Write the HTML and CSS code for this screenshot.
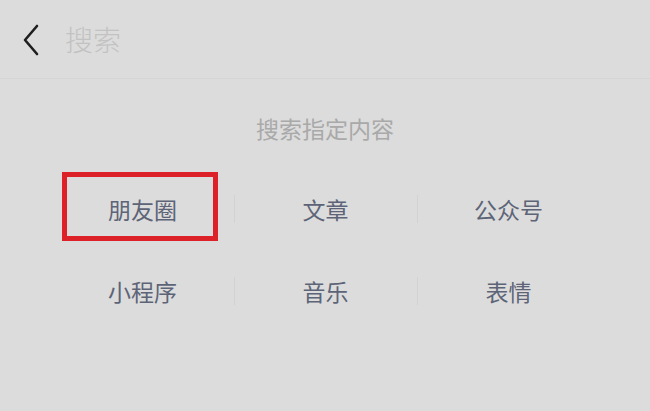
FILE: index.html
```html
<!DOCTYPE html>
<html lang="zh">
<head>
<meta charset="utf-8">
<link rel="stylesheet" href="styles.css">
</head>
<body>
<div class="header">
  <svg class="back" width="20" height="34" viewBox="0 0 20 34"><path d="M16 3 L4 17 L16 31" fill="none" stroke="#1e1e1e" stroke-width="2.6" stroke-linecap="round" stroke-linejoin="round"/></svg>
  <span class="title">搜索</span>
</div>
<div class="caption">搜索指定内容</div>
<div class="grid">
  <div class="cell first"><span>朋友圈</span><div class="mark"></div></div>
  <div class="cell"><span>文章</span></div>
  <div class="cell"><span>公众号</span></div>
  <div class="cell"><span>小程序</span></div>
  <div class="cell"><span>音乐</span></div>
  <div class="cell"><span>表情</span></div>
</div>
</body>
</html>
```
FILE: styles.css
```css
html, body {
  margin: 0;
  padding: 0;
  background: #dcdcdc;
  font-family: "Noto Sans CJK SC", "Noto Sans", sans-serif;
}
body {
  width: 650px;
  height: 411px;
  overflow: hidden;
}
.header {
  height: 78px;
  border-bottom: 1px solid #d5d5d5;
  display: flex;
  align-items: center;
  padding-left: 21px;
  box-sizing: content-box;
}
.back {
  display: block;
  margin-right: 24px;
  margin-top: 2px;
}
.title {
  font-size: 28px;
  color: #c2c2c2;
  line-height: 1;
  font-weight: 300;
}
.caption {
  margin-top: 34px;
  height: 30px;
  line-height: 30px;
  text-align: center;
  font-size: 23px;
  color: #a9a9a9;
}
.grid {
  margin: 27px 50px 0 51px;
  display: grid;
  grid-template-columns: repeat(3, 1fr);
  grid-auto-rows: 82px;
}
.cell {
  position: relative;
  display: flex;
  align-items: center;
  justify-content: center;
  font-size: 23px;
  color: #5d6477;
  padding-bottom: 4px;
  box-sizing: border-box;
}
.cell:not(:nth-child(3n+1))::before {
  content: "";
  position: absolute;
  left: 0;
  top: 25px;
  height: 28px;
  width: 1px;
  background: #d2d2d2;
}
.mark {
  position: absolute;
  left: 11px;
  top: 2px;
  width: 156px;
  height: 69px;
  border: 5px solid #dd2128;
  box-sizing: border-box;
}
```
